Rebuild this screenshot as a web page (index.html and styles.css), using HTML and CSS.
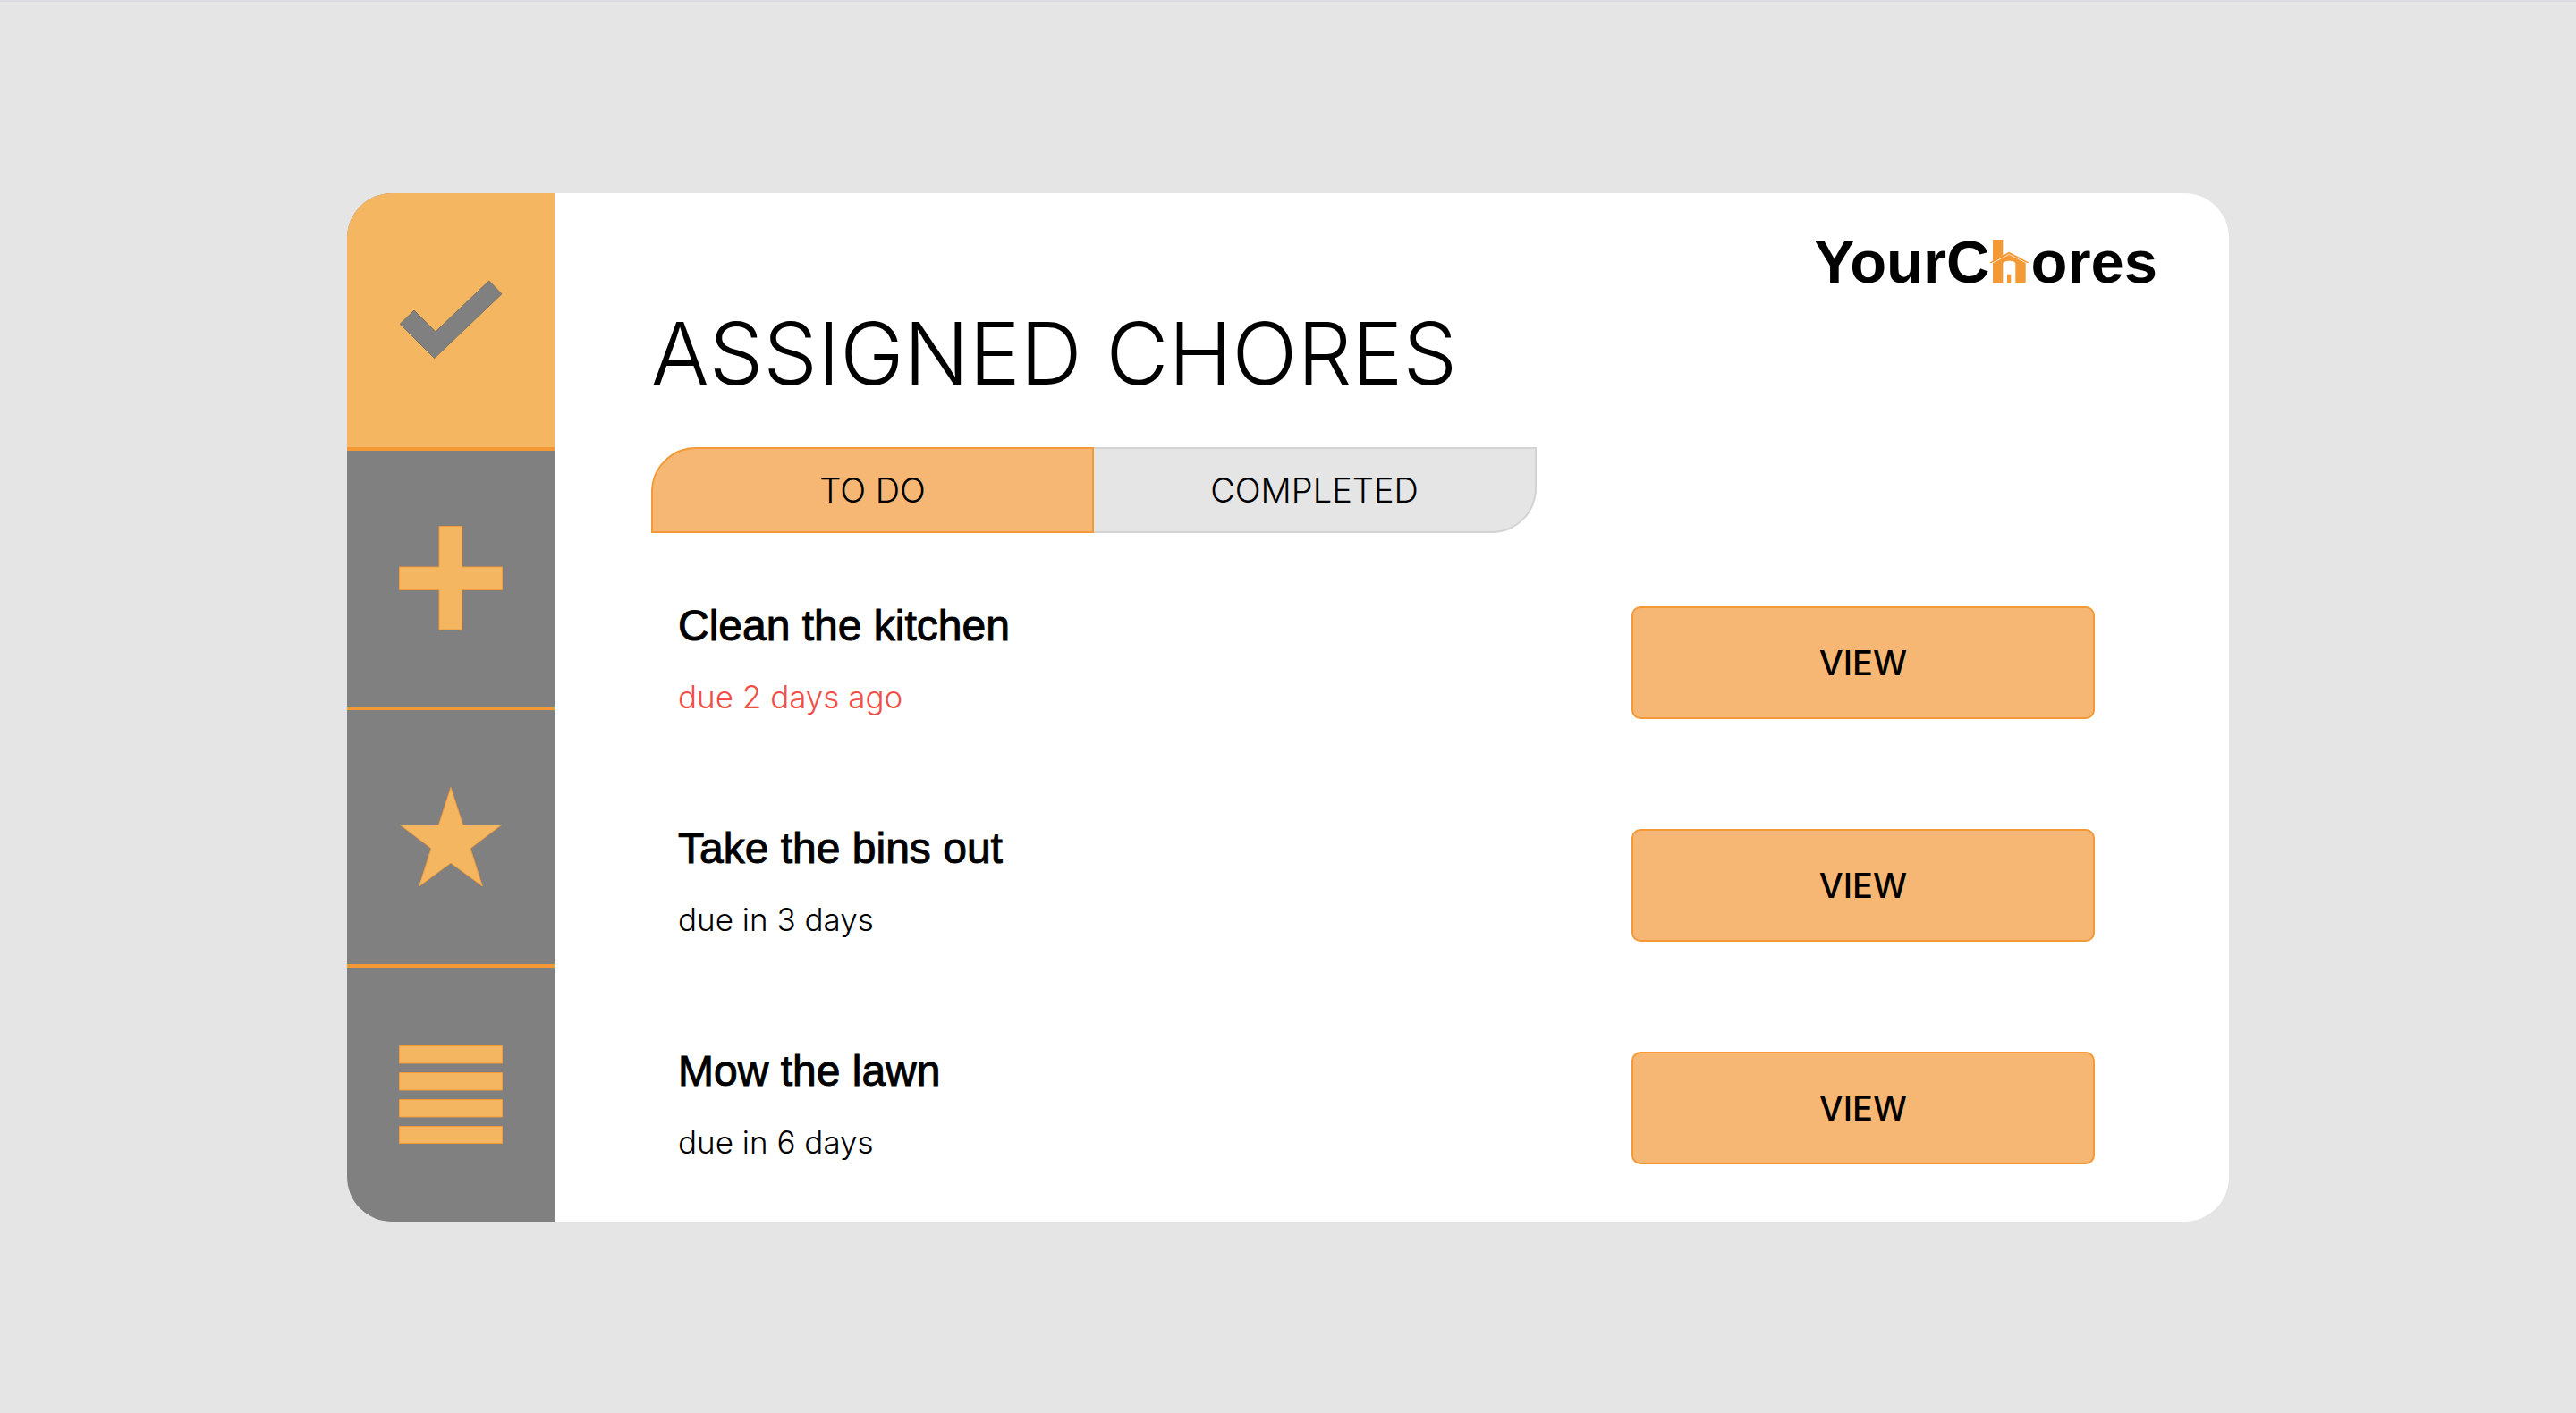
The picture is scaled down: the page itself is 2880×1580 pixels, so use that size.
FILE: index.html
```html
<!DOCTYPE html>
<html lang="en">
<head>
  <meta charset="utf-8">
  <meta name="viewport" content="width=device-width, initial-scale=1">
  <title>YourChores</title>
  <link rel="stylesheet" href="styles.css">
</head>
<body>
  <div class="card">
    <nav class="sidebar" aria-label="Main">
      <a class="nav-item nav-item-active" href="#assigned" aria-label="Assigned chores" aria-current="page">
        <svg class="nav-icon nav-icon-check" width="116" height="116" viewBox="0 0 116 116" aria-hidden="true">
          <path d="M1.2 62.3 17 47 41 70.8 100.7 14 115 28.7 39.7 100.6Z"/>
        </svg>
      </a>
      <a class="nav-item" href="#add" aria-label="Add chore">
        <svg class="nav-icon" width="116" height="118" viewBox="0 0 116 118" aria-hidden="true">
          <path d="M45 .5H70.5V46H115.5V71.500H70.5V116H45V71.500H.5V46H45Z"/>
        </svg>
      </a>
      <a class="nav-item" href="#rewards" aria-label="Rewards">
        <svg class="nav-icon" width="116" height="116" viewBox="0 0 116 116" aria-hidden="true">
          <path d="M58 2.500 71.600 44.500H114.500L80 70.700 93.300 113 58 87 22.700 113 36 70.700 1.500 44.500H44.400Z"/>
        </svg>
      </a>
      <a class="nav-item" href="#list" aria-label="All chores">
        <svg class="nav-icon" width="116" height="116" viewBox="0 0 116 116" aria-hidden="true">
          <path d="M.5 3.500H115.500V23H.5ZM.5 33.500H115.500V53H.5ZM.5 63.500H115.500V83H.5ZM.5 93.500H115.500V112.500H.5Z"/>
        </svg>
      </a>
    </nav>

    <main class="content">
      <div class="logo" role="img" aria-label="YourChores">
        <span>YourC</span>
        <svg class="logo-house" width="46" height="48" viewBox="0 0 46 48" aria-hidden="true">
          <path d="M4 0H15.300V17.300L22.300 13.800 44.500 25.500 43.500 26.300 40.700 25.800V48H29.300V27C29.300 22.600 15.300 22.600 15.300 27V48H4V25.800L1.500 26.300.5 25.500 4 23.500Z"/>
          <path d="M20 38.700H24.300V48H20Z"/>
          <path class="logo-eave" d="M2.500 26.500 22.300 16.500 42.500 26.500"/>
        </svg>
        <span>ores</span>
      </div>

      <h1 class="title">ASSIGNED CHORES</h1>

      <div class="tabs" role="tablist">
        <button class="tab tab-active" type="button" role="tab" aria-selected="true">TO DO</button>
        <button class="tab" type="button" role="tab" aria-selected="false">COMPLETED</button>
      </div>

      <ul class="chores">
        <li class="chore">
          <div class="chore-text">
            <h2 class="chore-name">Clean the kitchen</h2>
            <p class="chore-due chore-due-late">due 2 days ago</p>
          </div>
          <button class="view" type="button">VIEW</button>
        </li>
        <li class="chore">
          <div class="chore-text">
            <h2 class="chore-name">Take the bins out</h2>
            <p class="chore-due">due in 3 days</p>
          </div>
          <button class="view" type="button">VIEW</button>
        </li>
        <li class="chore">
          <div class="chore-text">
            <h2 class="chore-name">Mow the lawn</h2>
            <p class="chore-due">due in 6 days</p>
          </div>
          <button class="view" type="button">VIEW</button>
        </li>
      </ul>
    </main>
  </div>
</body>
</html>
```
FILE: styles.css
```css
:root {
  --accent: #f39a37;
  --accent-soft: #f6b774;
  --accent-nav: #f5b662;
  --grey: #808080;
  --page: #e5e5e5;
}

* {
  box-sizing: border-box;
}

body {
  margin: 0;
  min-height: 100vh;
  display: flex;
  align-items: center;
  justify-content: center;
  border-top: 2px solid #dbdbe0;
  background: var(--page);
  color: #000;
  font-family: Inter, "Liberation Sans", sans-serif;
  font-weight: 300;
}

.card {
  display: flex;
  width: 100%;
  max-width: 2104px;
  border-radius: 50px;
  overflow: hidden;
  background: #fff;
}

/* Sidebar */
.sidebar {
  flex: none;
  display: flex;
  flex-direction: column;
  background: var(--grey);
}

.nav-item {
  flex: 1 0 auto;
  display: flex;
  align-items: center;
  padding: 84px 58px;
  border-bottom: 4px solid var(--accent);
}

.nav-item:last-child {
  border-bottom: 0;
}

.nav-item-active {
  background: var(--accent-nav);
}

.nav-icon {
  display: block;
  fill: var(--accent-nav);
  stroke: var(--accent);
}

.nav-icon-check {
  fill: var(--grey);
  stroke: #74746a;
}

/* Content */
.content {
  flex: 1;
  min-width: 0;
  padding: 44px 80px 64px 108px;
}

.logo {
  display: flex;
  align-items: baseline;
  justify-content: flex-end;
  font: bold 67px/66px "Liberation Sans", sans-serif;
}

.logo-house {
  fill: var(--accent);
}

.logo-eave {
  fill: none;
  stroke: #fff;
  stroke-opacity: 0.7;
}

.title {
  margin: 12px 0 48px;
  font-size: 96px;
  font-weight: 300;
  line-height: 114px;
}

.tabs {
  display: grid;
  grid-template-columns: 1fr 1fr;
  max-width: 990px;
}

.tab {
  height: 96px;
  padding: 0;
  border: 2px solid #d3d3d3;
  border-left: 0;
  border-radius: 0 0 50px 0;
  background: var(--page);
  color: inherit;
  font: inherit;
  font-size: 38px;
}

.tab-active {
  border: 2px solid var(--accent);
  border-radius: 50px 0 0 0;
  background: var(--accent-soft);
}

.chores {
  display: grid;
  gap: 123px;
  margin: 82px 70px 0 0;
  padding: 0 0 0 30px;
  list-style: none;
}

.chore {
  display: flex;
  justify-content: space-between;
}

.chore-text {
  display: grid;
  gap: 35px;
  align-content: start;
}

.chore-name {
  margin: 0;
  font: 48px/44px "Liberation Sans", sans-serif;
  -webkit-text-stroke: 1px currentColor;
}

.chore-due {
  margin: 0;
  font-size: 35px;
  line-height: 44px;
}

.chore-due-late {
  color: #ee5048;
}

.view {
  width: 518px;
  height: 126px;
  border: 2px solid var(--accent);
  border-radius: 10px;
  background: var(--accent-soft);
  color: inherit;
  font: inherit;
  font-size: 38px;
  font-weight: 500;
}
```
